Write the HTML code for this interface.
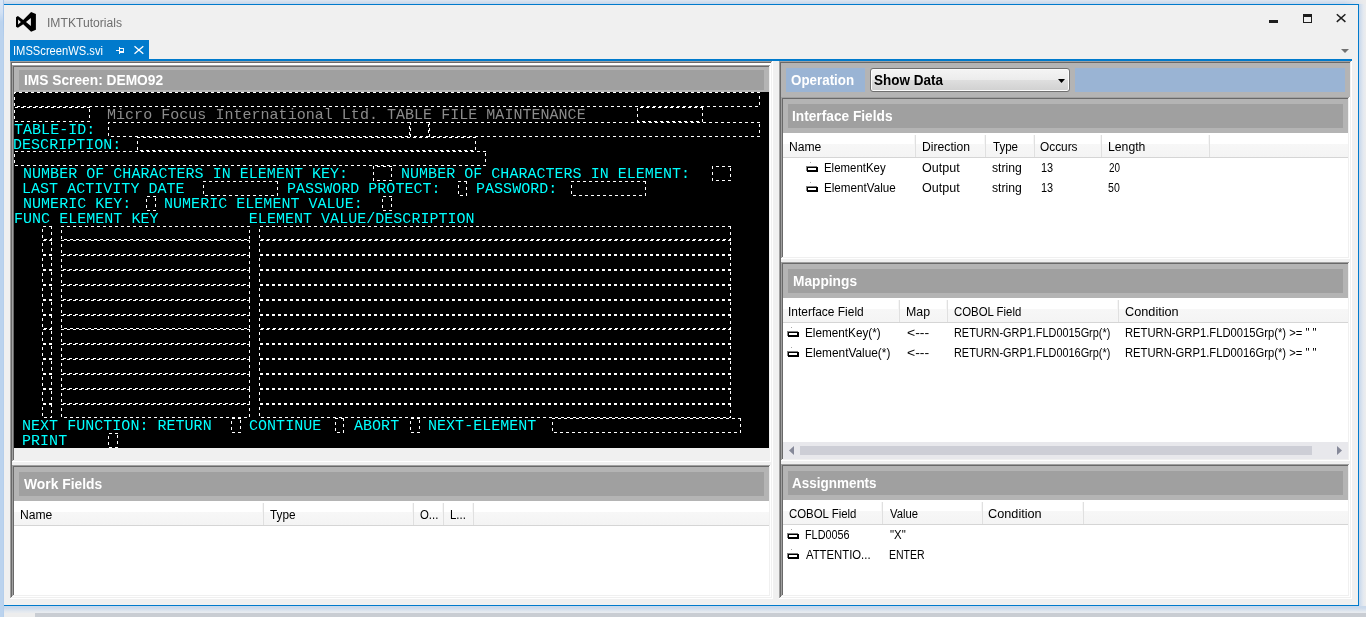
<!DOCTYPE html>
<html lang="en"><head><meta charset="utf-8"><title>IMTKTutorials - IMSScreenWS.svi</title>
<style>
html,body{margin:0;padding:0}
body{width:1366px;height:617px;overflow:hidden;position:relative;background:#F0F0F0;font-family:"Liberation Sans",sans-serif}
#root{position:absolute;left:0;top:0;width:1366px;height:617px;overflow:hidden;will-change:transform}
body div,body svg.abs,body span.t,.grp{position:absolute}
.grp{left:0;top:0;width:0;height:0;margin:0;padding:0;display:block}
.desk-top{left:0;top:0;width:1366px;height:4px;background:linear-gradient(#DEE6F0,#C6D6EA)}
.desk-left{left:0;top:0;width:4px;height:617px;background:linear-gradient(#D9E6F6 0,#D2E1F4 12px,#BBD3EE 22px,#BBD3EE 100%)}
.desk-edge{left:3px;top:0;width:1px;height:617px;background:linear-gradient(#A8C6EA 0,#A8C6EA 22px,#B6CFEC 40px,#B6CFEC 100%)}
.desk-corner{left:1344px;top:0;width:22px;height:4px;background:linear-gradient(90deg,rgba(237,237,237,0),#EBEBEC 90%)}
.desk-right{left:1359px;top:4px;width:7px;height:613px;background:linear-gradient(90deg,#C6D7EC,#E4E9F0 60%,#EDEDED)}
.desk-bottom{left:4px;top:606px;width:1362px;height:7px;background:linear-gradient(#C9D8EB 0,#CCDAEB 30%,#E2E8EF 75%,#E9ECF0 100%)}
.win{left:4px;top:4px;width:1354px;height:600px;background:#F0F0F0;border:1px solid #007ACC;border-left:0}
.t{white-space:pre;line-height:20px;margin:0;padding:0;transform-origin:0 0}
.ui{font-size:12px}
.hd{font-size:13.75px;font-weight:bold}
.lh{height:24px;background:linear-gradient(#FFFFFF 0,#FFFFFF 45%,#F7F7F7 46%,#F4F4F4 100%);border-bottom:1px solid #D5D5D5;box-sizing:content-box}
.sep{width:1px;height:22px;background:#E0E0E0;border-left:1px solid #F6F6F6}
.combo{border:1px solid #707070;border-radius:3px;background:linear-gradient(#F4F4F4 0,#ECECEC 48%,#DEDEDE 52%,#D0D0D0 100%);box-shadow:inset 0 0 0 1px #FCFCFC}
.term{background:#000;overflow:hidden}
.m{font-family:"Liberation Mono",monospace;font-size:15px;line-height:15px;letter-spacing:0.03px}
</style></head>
<body>
<div id="root">
<div class="grp" id="desktop">
<div class="desk-top"></div><div class="desk-corner"></div><div class="desk-left"></div><div class="desk-right"></div><div class="desk-bottom"></div>
<div style="left:4px;top:613px;width:31px;height:4px;background:#EDEDED;"></div>
<div style="left:35px;top:613px;width:1331px;height:4px;background:#C9CDD3;"></div>
<div class="desk-edge"></div>
</div>
<div class="win"></div>
<header class="grp" id="titlebar" aria-label="Title bar">
<svg class="abs" style="left:14px;top:10px" width="24" height="24" viewBox="14 10 24 24"><path fill="#000" fill-rule="evenodd" d="M16 17.3 L17.9 16.1 L23.2 19.9 L31.1 12 L35.9 14 L35.9 29.8 L31.1 31.8 L23.2 24.2 L17.9 27.8 L16 26.7 Z M18.1 19.5 L18.1 24.6 L20.9 22 Z M30.9 18 L26 22 L30.9 26 Z"/></svg>
<span id="title" class="t ui" style="left:47px;top:13px;transform:scaleX(1.011);color:#6E6E6E;">IMTKTutorials</span>
<div style="left:1269px;top:20px;width:9px;height:3px;background:#1E1E1E;"></div>
<div class="abs" style="left:1303px;top:14px;width:7px;height:5px;border:1px solid #1E1E1E;border-top-width:3px"></div>
<svg class="abs" style="left:1335px;top:13px" width="12" height="10" viewBox="0 0 12 10"><path d="M1.8 1.2 L10.4 8.9 M10.4 1.2 L1.8 8.9" stroke="#1E1E1E" stroke-width="1.5" fill="none"/></svg>
<svg class="abs" style="left:1341px;top:49px" width="8" height="4" viewBox="0 0 8 4"><path d="M0 0 H8 L4 4 Z" fill="#717171"/></svg>
</header>
<nav class="grp" id="tabstrip" aria-label="Document tabs">
<div style="left:10px;top:40px;width:139px;height:19px;background:#007ACC;"></div>
<div style="left:10px;top:59px;width:1342px;height:2px;background:#007ACC;"></div>
<span id="tab" class="t ui" style="left:13px;top:41px;transform:scaleX(0.931);color:#FFFFFF;">IMSScreenWS.svi</span>
<svg class="abs" style="left:116px;top:47px" width="8" height="7" viewBox="0 0 8 7" shape-rendering="crispEdges"><path fill="#F4F8FF" d="M0 3h3v1h-3z M3 0h1v7h-1z M4 1h4v1h-4z M7 1h1v5h-1z M4 4h4v2h-4z"/></svg>
<svg class="abs" style="left:133px;top:45px" width="12" height="10" viewBox="0 0 12 10"><path d="M1.5 1.2 L10.3 8.8 M10.3 1.2 L1.5 8.8" stroke="#fff" stroke-width="1.3" fill="none"/></svg>
</nav>
<section class="grp" id="pane-left" aria-label="IMS screen designer">
<div style="left:10px;top:61px;width:763px;height:538px;background:#FFFFFF;"></div>
<div style="left:10px;top:61px;width:762px;height:537px;background:#A0A0A0;"></div>
<div style="left:11px;top:62px;width:761px;height:536px;background:#F0F0F0;"></div>
<div style="left:11px;top:62px;width:760px;height:535px;background:#696969;"></div>
<div style="left:12px;top:63px;width:759px;height:534px;background:#FFFFFF;"></div>
<div class="grp" id="panel-ims">
<div style="left:12px;top:65px;width:759px;height:397px;background:#FFFFFF;"></div>
<div style="left:12px;top:65px;width:758px;height:396px;background:#A0A0A0;"></div>
<div style="left:13px;top:66px;width:757px;height:395px;background:#F0F0F0;"></div>
<div style="left:13px;top:66px;width:756px;height:394px;background:#696969;"></div>
<div style="left:14px;top:67px;width:755px;height:393px;background:#F0F0F0;"></div>
<div style="left:14px;top:67px;width:755px;height:25px;background:#B4B4B4;"></div>
<div style="left:19px;top:70px;width:745px;height:20px;background:#A0A0A0;"></div>
<span id="h_ims" class="t hd" style="left:24px;top:71px;color:#FFFFFF;">IMS Screen: DEMO92</span>
<div class="term" style="left:14px;top:92px;width:755px;height:356px">
<svg class="abs" style="left:0;top:0" width="755" height="356" viewBox="0 0 755 356" shape-rendering="crispEdges" fill="none" stroke="#fff" stroke-width="1" stroke-dasharray="3 3" stroke-dashoffset="0.5"><path d="M745.5 0.5H0.5V14.5H745.5Z"/><path d="M75.5 15.5H0.5V29.5H75.5Z"/><path d="M688.5 15.5H623.5V29.5H688.5Z"/><path d="M395.5 30.5H94.5V44.5H395.5Z"/><path d="M414.5 30.5H396.5V44.5H414.5Z"/><path d="M745.5 30.5H415.5V44.5H745.5Z"/><path d="M461.5 45.5H123.5V58.5H461.5Z"/><path d="M471.5 59.5H0.5V73.5H471.5Z"/><path d="M377.5 74.5H359.5V88.5H377.5Z"/><path d="M716.5 74.5H698.5V88.5H716.5Z"/><path d="M263.5 89.5H189.5V103.5H263.5Z"/><path d="M452.5 89.5H444.5V103.5H452.5Z"/><path d="M631.5 89.5H557.5V103.5H631.5Z"/><path d="M141.5 104.5H132.5V118.5H141.5Z"/><path d="M377.5 104.5H368.5V118.5H377.5Z"/><path d="M37.5 134.5H28.5V147.5H37.5Z"/><path d="M235.5 134.5H47.5V147.5H235.5Z"/><path d="M716.5 134.5H245.5V147.5H716.5Z"/><path d="M37.5 148.5H28.5V162.5H37.5Z"/><path d="M235.5 148.5H47.5V162.5H235.5Z"/><path d="M716.5 148.5H245.5V162.5H716.5Z"/><path d="M37.5 163.5H28.5V177.5H37.5Z"/><path d="M235.5 163.5H47.5V177.5H235.5Z"/><path d="M716.5 163.5H245.5V177.5H716.5Z"/><path d="M37.5 178.5H28.5V192.5H37.5Z"/><path d="M235.5 178.5H47.5V192.5H235.5Z"/><path d="M716.5 178.5H245.5V192.5H716.5Z"/><path d="M37.5 193.5H28.5V207.5H37.5Z"/><path d="M235.5 193.5H47.5V207.5H235.5Z"/><path d="M716.5 193.5H245.5V207.5H716.5Z"/><path d="M37.5 208.5H28.5V222.5H37.5Z"/><path d="M235.5 208.5H47.5V222.5H235.5Z"/><path d="M716.5 208.5H245.5V222.5H716.5Z"/><path d="M37.5 223.5H28.5V236.5H37.5Z"/><path d="M235.5 223.5H47.5V236.5H235.5Z"/><path d="M716.5 223.5H245.5V236.5H716.5Z"/><path d="M37.5 237.5H28.5V251.5H37.5Z"/><path d="M235.5 237.5H47.5V251.5H235.5Z"/><path d="M716.5 237.5H245.5V251.5H716.5Z"/><path d="M37.5 252.5H28.5V266.5H37.5Z"/><path d="M235.5 252.5H47.5V266.5H235.5Z"/><path d="M716.5 252.5H245.5V266.5H716.5Z"/><path d="M37.5 267.5H28.5V281.5H37.5Z"/><path d="M235.5 267.5H47.5V281.5H235.5Z"/><path d="M716.5 267.5H245.5V281.5H716.5Z"/><path d="M37.5 282.5H28.5V296.5H37.5Z"/><path d="M235.5 282.5H47.5V296.5H235.5Z"/><path d="M716.5 282.5H245.5V296.5H716.5Z"/><path d="M37.5 297.5H28.5V311.5H37.5Z"/><path d="M235.5 297.5H47.5V311.5H235.5Z"/><path d="M716.5 297.5H245.5V311.5H716.5Z"/><path d="M37.5 312.5H28.5V325.5H37.5Z"/><path d="M235.5 312.5H47.5V325.5H235.5Z"/><path d="M716.5 312.5H245.5V325.5H716.5Z"/><path d="M226.5 326.5H217.5V340.5H226.5Z"/><path d="M329.5 326.5H321.5V340.5H329.5Z"/><path d="M405.5 326.5H396.5V340.5H405.5Z"/><path d="M726.5 326.5H538.5V340.5H726.5Z"/><path d="M103.5 341.5H94.5V355.5H103.5Z"/></svg>
</div>
<span id="m1_10" class="t m" style="left:107px;top:108px;color:#8C8C8C;">Micro Focus International Ltd. TABLE FILE MAINTENANCE</span>
<span id="m2_0" class="t m" style="left:14px;top:123px;color:#00FFFF;">TABLE-ID:</span>
<span id="m3_0" class="t m" style="left:13px;top:138px;color:#00FFFF;">DESCRIPTION:</span>
<span id="m5_1" class="t m" style="left:23px;top:167px;color:#00FFFF;">NUMBER OF CHARACTERS IN ELEMENT KEY:</span>
<span id="m5_41" class="t m" style="left:401px;top:167px;color:#00FFFF;">NUMBER OF CHARACTERS IN ELEMENT:</span>
<span id="m6_1" class="t m" style="left:22px;top:182px;color:#00FFFF;">LAST ACTIVITY DATE</span>
<span id="m6_29" class="t m" style="left:287px;top:182px;color:#00FFFF;">PASSWORD PROTECT:</span>
<span id="m6_49" class="t m" style="left:476px;top:182px;color:#00FFFF;">PASSWORD:</span>
<span id="m7_1" class="t m" style="left:23px;top:197px;color:#00FFFF;">NUMERIC KEY:</span>
<span id="m7_16" class="t m" style="left:164px;top:197px;color:#00FFFF;">NUMERIC ELEMENT VALUE:</span>
<span id="m8_0" class="t m" style="left:14px;top:212px;color:#00FFFF;">FUNC ELEMENT KEY          ELEMENT VALUE/DESCRIPTION</span>
<span id="m22_1" class="t m" style="left:22px;top:419px;color:#00FFFF;">NEXT FUNCTION: RETURN</span>
<span id="m22_25" class="t m" style="left:249px;top:419px;color:#00FFFF;">CONTINUE</span>
<span id="m22_36" class="t m" style="left:354px;top:419px;color:#00FFFF;">ABORT</span>
<span id="m22_44" class="t m" style="left:428px;top:419px;color:#00FFFF;">NEXT-ELEMENT</span>
<span id="m23_1" class="t m" style="left:22px;top:434px;color:#00FFFF;">PRINT</span>
</div>
<div style="left:12px;top:462px;width:759px;height:3px;background:#F0F0F0;"></div>
<div class="grp" id="panel-work">
<div style="left:12px;top:465px;width:759px;height:132px;background:#FFFFFF;"></div>
<div style="left:12px;top:465px;width:758px;height:131px;background:#A0A0A0;"></div>
<div style="left:13px;top:466px;width:757px;height:130px;background:#F0F0F0;"></div>
<div style="left:13px;top:466px;width:756px;height:129px;background:#696969;"></div>
<div style="left:14px;top:467px;width:755px;height:128px;background:#FFFFFF;"></div>
<div style="left:14px;top:467px;width:755px;height:34px;background:#B4B4B4;"></div>
<div style="left:19px;top:472px;width:745px;height:24px;background:#A0A0A0;"></div>
<span id="h_work" class="t hd" style="left:24px;top:475px;transform:scaleX(1.0064);color:#FFFFFF;">Work Fields</span>
<div class="lh" style="left:14px;top:501px;width:755px"></div>
<span id="wfh0" class="t ui" style="left:20px;top:505px;transform:scaleX(1.011);color:#000000;">Name</span>
<div class="sep" style="left:262px;top:503px"></div>
<span id="wfh1" class="t ui" style="left:270px;top:505px;transform:scaleX(0.9816);color:#000000;">Type</span>
<div class="sep" style="left:412px;top:503px"></div>
<span id="wfh2" class="t ui" style="left:420px;top:505px;transform:scaleX(0.95);color:#000000;">O...</span>
<div class="sep" style="left:442px;top:503px"></div>
<span id="wfh3" class="t ui" style="left:450px;top:505px;transform:scaleX(0.95);color:#000000;">L...</span>
<div class="sep" style="left:472px;top:503px"></div>
</div>
</section>
<section class="grp" id="pane-right" aria-label="Operation mapping">
<div style="left:779px;top:61px;width:573px;height:538px;background:#FFFFFF;"></div>
<div style="left:779px;top:61px;width:572px;height:537px;background:#A0A0A0;"></div>
<div style="left:780px;top:62px;width:571px;height:536px;background:#F0F0F0;"></div>
<div style="left:780px;top:62px;width:570px;height:535px;background:#696969;"></div>
<div style="left:781px;top:63px;width:569px;height:534px;background:#B4B4B4;"></div>
<div class="grp" id="operation-bar">
<div style="left:786px;top:68px;width:79px;height:24px;background:#9AB4D4;"></div>
<span id="op" class="t hd" style="left:791px;top:71px;transform:scaleX(0.9721);color:#FFFFFF;">Operation</span>
<div class="combo" style="left:870px;top:68px;width:198px;height:22px"></div>
<span id="show" class="t hd" style="left:874px;top:71px;transform:scaleX(0.9816);color:#000000;">Show Data</span>
<svg class="abs" style="left:1058px;top:79px" width="7" height="4" viewBox="0 0 7 4"><path d="M0 0 H7 L3.5 4 Z" fill="#000"/></svg>
<div style="left:1075px;top:68px;width:270px;height:24px;background:#9AB4D4;"></div>
</div>
<div class="grp" id="panel-interface">
<div style="left:781px;top:97px;width:569px;height:162px;background:#FFFFFF;"></div>
<div style="left:781px;top:97px;width:568px;height:161px;background:#A0A0A0;"></div>
<div style="left:782px;top:98px;width:567px;height:160px;background:#F0F0F0;"></div>
<div style="left:782px;top:98px;width:566px;height:159px;background:#696969;"></div>
<div style="left:783px;top:99px;width:565px;height:158px;background:#FFFFFF;"></div>
<div style="left:783px;top:99px;width:565px;height:34px;background:#B4B4B4;"></div>
<div style="left:788px;top:104px;width:555px;height:24px;background:#A0A0A0;"></div>
<span id="h_if" class="t hd" style="left:792px;top:107px;transform:scaleX(0.9968);color:#FFFFFF;">Interface Fields</span>
<div class="lh" style="left:783px;top:133px;width:565px"></div>
<span id="ifh0" class="t ui" style="left:789px;top:137px;transform:scaleX(1.011);color:#000000;">Name</span>
<div class="sep" style="left:914px;top:135px"></div>
<span id="ifh1" class="t ui" style="left:922px;top:137px;transform:scaleX(1.0141);color:#000000;">Direction</span>
<div class="sep" style="left:984px;top:135px"></div>
<span id="ifh2" class="t ui" style="left:993px;top:137px;transform:scaleX(0.9622);color:#000000;">Type</span>
<div class="sep" style="left:1033px;top:135px"></div>
<span id="ifh3" class="t ui" style="left:1040px;top:137px;transform:scaleX(0.9871);color:#000000;">Occurs</span>
<div class="sep" style="left:1100px;top:135px"></div>
<span id="ifh4" class="t ui" style="left:1108px;top:137px;transform:scaleX(1.0185);color:#000000;">Length</span>
<div class="sep" style="left:1208px;top:135px"></div>
<svg class="abs" style="left:806px;top:162px" width="13" height="11" viewBox="0 0 13 11" shape-rendering="crispEdges"><rect x="4" y="0" width="1" height="1" fill="#A8A8A8"/><rect x="0" y="4" width="11" height="5" fill="#808080"/><rect x="1" y="5" width="11" height="5" fill="#000"/><rect x="2" y="6" width="8" height="2" fill="#fff"/></svg>
<span id="if0a" class="t ui" style="left:824px;top:158px;transform:scaleX(0.9525);color:#000;">ElementKey</span>
<span id="if0b" class="t ui" style="left:922px;top:158px;transform:scaleX(1.0457);color:#000;">Output</span>
<span id="if0c" class="t ui" style="left:992px;top:158px;transform:scaleX(1.017);color:#000;">string</span>
<span id="if0d" class="t ui" style="left:1041px;top:158px;transform:scaleX(0.9098);color:#000;">13</span>
<span id="if0e" class="t ui" style="left:1109px;top:158px;transform:scaleX(0.822);color:#000;">20</span>
<svg class="abs" style="left:806px;top:182px" width="13" height="11" viewBox="0 0 13 11" shape-rendering="crispEdges"><rect x="4" y="0" width="1" height="1" fill="#A8A8A8"/><rect x="0" y="4" width="11" height="5" fill="#808080"/><rect x="1" y="5" width="11" height="5" fill="#000"/><rect x="2" y="6" width="8" height="2" fill="#fff"/></svg>
<span id="if1a" class="t ui" style="left:824px;top:178px;transform:scaleX(0.9712);color:#000;">ElementValue</span>
<span id="if1b" class="t ui" style="left:922px;top:178px;transform:scaleX(1.0457);color:#000;">Output</span>
<span id="if1c" class="t ui" style="left:992px;top:178px;transform:scaleX(1.017);color:#000;">string</span>
<span id="if1d" class="t ui" style="left:1041px;top:178px;transform:scaleX(0.9098);color:#000;">13</span>
<span id="if1e" class="t ui" style="left:1108px;top:178px;transform:scaleX(0.8804);color:#000;">50</span>
</div>
<div style="left:781px;top:259px;width:569px;height:3px;background:#F0F0F0;"></div>
<div class="grp" id="panel-mappings">
<div style="left:781px;top:262px;width:569px;height:199px;background:#FFFFFF;"></div>
<div style="left:781px;top:262px;width:568px;height:198px;background:#A0A0A0;"></div>
<div style="left:782px;top:263px;width:567px;height:197px;background:#F0F0F0;"></div>
<div style="left:782px;top:263px;width:566px;height:196px;background:#696969;"></div>
<div style="left:783px;top:264px;width:565px;height:195px;background:#FFFFFF;"></div>
<div style="left:783px;top:264px;width:565px;height:34px;background:#B4B4B4;"></div>
<div style="left:788px;top:269px;width:555px;height:24px;background:#A0A0A0;"></div>
<span id="h_map" class="t hd" style="left:793px;top:272px;transform:scaleX(0.9976);color:#FFFFFF;">Mappings</span>
<div class="lh" style="left:783px;top:298px;width:565px"></div>
<span id="mph0" class="t ui" style="left:788px;top:302px;transform:scaleX(0.9956);color:#000000;">Interface Field</span>
<div class="sep" style="left:898px;top:300px"></div>
<span id="mph1" class="t ui" style="left:906px;top:302px;transform:scaleX(1.0297);color:#000000;">Map</span>
<div class="sep" style="left:946px;top:300px"></div>
<span id="mph2" class="t ui" style="left:954px;top:302px;transform:scaleX(0.949);color:#000000;">COBOL Field</span>
<div class="sep" style="left:1117px;top:300px"></div>
<span id="mph3" class="t ui" style="left:1125px;top:302px;transform:scaleX(1.0589);color:#000000;">Condition</span>
<svg class="abs" style="left:787px;top:327px" width="13" height="11" viewBox="0 0 13 11" shape-rendering="crispEdges"><rect x="4" y="0" width="1" height="1" fill="#A8A8A8"/><rect x="0" y="4" width="11" height="5" fill="#808080"/><rect x="1" y="5" width="11" height="5" fill="#000"/><rect x="2" y="6" width="8" height="2" fill="#fff"/></svg>
<span id="mp0a" class="t ui" style="left:805px;top:323px;transform:scaleX(0.9789);color:#000;">ElementKey(*)</span>
<span id="mp0b" class="t ui" style="left:907px;top:323px;transform:scaleX(1.1634);color:#000;">&lt;---</span>
<span id="mp0c" class="t ui" style="left:954px;top:323px;transform:scaleX(0.9086);color:#000;">RETURN-GRP1.FLD0015Grp(*)</span>
<span id="mp0d" class="t ui" style="left:1125px;top:323px;transform:scaleX(0.9363);color:#000;">RETURN-GRP1.FLD0015Grp(*) &gt;= " "</span>
<svg class="abs" style="left:787px;top:347px" width="13" height="11" viewBox="0 0 13 11" shape-rendering="crispEdges"><rect x="4" y="0" width="1" height="1" fill="#A8A8A8"/><rect x="0" y="4" width="11" height="5" fill="#808080"/><rect x="1" y="5" width="11" height="5" fill="#000"/><rect x="2" y="6" width="8" height="2" fill="#fff"/></svg>
<span id="mp1a" class="t ui" style="left:805px;top:343px;transform:scaleX(0.9869);color:#000;">ElementValue(*)</span>
<span id="mp1b" class="t ui" style="left:907px;top:343px;transform:scaleX(1.1634);color:#000;">&lt;---</span>
<span id="mp1c" class="t ui" style="left:954px;top:343px;transform:scaleX(0.9086);color:#000;">RETURN-GRP1.FLD0016Grp(*)</span>
<span id="mp1d" class="t ui" style="left:1125px;top:343px;transform:scaleX(0.9363);color:#000;">RETURN-GRP1.FLD0016Grp(*) &gt;= " "</span>
<div style="left:783px;top:442px;width:565px;height:17px;background:#E8E8EC;"></div>
<div style="left:800px;top:446px;width:512px;height:9px;background:#CDCED6;"></div>
<svg class="abs" style="left:789px;top:446px" width="5" height="9" viewBox="0 0 5 9"><path d="M5 0 V9 L0 4.5 Z" fill="#868999"/></svg>
<svg class="abs" style="left:1337px;top:446px" width="5" height="9" viewBox="0 0 5 9"><path d="M0 0 V9 L5 4.5 Z" fill="#868999"/></svg>
</div>
<div style="left:781px;top:461px;width:569px;height:3px;background:#F0F0F0;"></div>
<div class="grp" id="panel-assignments">
<div style="left:781px;top:464px;width:569px;height:133px;background:#FFFFFF;"></div>
<div style="left:781px;top:464px;width:568px;height:132px;background:#A0A0A0;"></div>
<div style="left:782px;top:465px;width:567px;height:131px;background:#F0F0F0;"></div>
<div style="left:782px;top:465px;width:566px;height:130px;background:#696969;"></div>
<div style="left:783px;top:466px;width:565px;height:129px;background:#FFFFFF;"></div>
<div style="left:783px;top:466px;width:565px;height:34px;background:#B4B4B4;"></div>
<div style="left:788px;top:471px;width:555px;height:24px;background:#A0A0A0;"></div>
<span id="h_as" class="t hd" style="left:792px;top:474px;transform:scaleX(0.9797);color:#FFFFFF;">Assignments</span>
<div class="lh" style="left:783px;top:500px;width:565px"></div>
<span id="ash0" class="t ui" style="left:789px;top:504px;transform:scaleX(0.9512);color:#000000;">COBOL Field</span>
<div class="sep" style="left:881px;top:502px"></div>
<span id="ash1" class="t ui" style="left:890px;top:504px;transform:scaleX(0.9395);color:#000000;">Value</span>
<div class="sep" style="left:981px;top:502px"></div>
<span id="ash2" class="t ui" style="left:988px;top:504px;transform:scaleX(1.0589);color:#000000;">Condition</span>
<div class="sep" style="left:1082px;top:502px"></div>
<svg class="abs" style="left:787px;top:529px" width="13" height="11" viewBox="0 0 13 11" shape-rendering="crispEdges"><rect x="4" y="0" width="1" height="1" fill="#A8A8A8"/><rect x="0" y="4" width="11" height="5" fill="#808080"/><rect x="1" y="5" width="11" height="5" fill="#000"/><rect x="2" y="6" width="8" height="2" fill="#fff"/></svg>
<span id="as0a" class="t ui" style="left:805px;top:525px;transform:scaleX(0.9037);color:#000;">FLD0056</span>
<span id="as0b" class="t ui" style="left:890px;top:525px;transform:scaleX(0.9515);color:#000;">"X"</span>
<svg class="abs" style="left:787px;top:549px" width="13" height="11" viewBox="0 0 13 11" shape-rendering="crispEdges"><rect x="4" y="0" width="1" height="1" fill="#A8A8A8"/><rect x="0" y="4" width="11" height="5" fill="#808080"/><rect x="1" y="5" width="11" height="5" fill="#000"/><rect x="2" y="6" width="8" height="2" fill="#fff"/></svg>
<span id="as1a" class="t ui" style="left:806px;top:545px;transform:scaleX(0.9428);color:#000;">ATTENTIO...</span>
<span id="as1b" class="t ui" style="left:889px;top:545px;transform:scaleX(0.8769);color:#000;">ENTER</span>
</div>
</section>
</div>
</body></html>
